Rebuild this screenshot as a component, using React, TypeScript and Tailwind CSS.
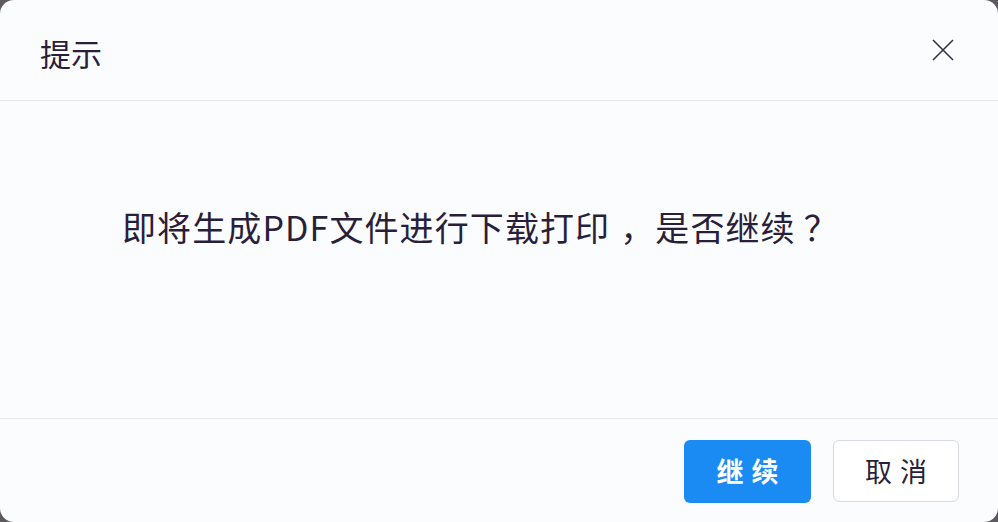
export default function App() {
  return (
    <div
      className="h-[522px] w-[998px] bg-[#5d5b60]"
      style={{ fontFamily: '"Noto Sans CJK SC", "Noto Sans", sans-serif' }}
    >
      <div className="flex h-full w-full flex-col overflow-hidden rounded-[14px] bg-[#fbfcfe] text-[#2a1f3a]">
        <div className="flex h-[101px] items-center justify-between border-b border-[#e6e8ed] pl-[40px] pr-[44px]">
          <h2 className="pt-[4px] text-[31px] leading-none">提示</h2>
          <button className="text-[#3a3045]">
            <svg width="22" height="22" viewBox="0 0 22 22" fill="none" stroke="currentColor" strokeWidth="1.6">
              <path d="M1 1L21 21M21 1L1 21" />
            </svg>
          </button>
        </div>

        <div className="h-[317px] pl-[122px] pt-[102px]">
          <p className="text-[34px] leading-[48px] tracking-[1.1px]">
            即将生成PDF文件进行下载打印
            <span className="ml-[10px]">，</span>
            是否继续
            <span className="ml-[8px]">？</span>
          </p>
        </div>

        <div className="flex flex-1 items-start justify-end gap-[22px] border-t border-[#e6e8ed] pr-[39px] pt-[21px]">
          <button className="flex h-[63px] w-[127px] items-center justify-center rounded-[6px] bg-[#1b8bf4] pl-[8px] text-[27px] font-bold tracking-[8px] text-white">
            继续
          </button>
          <button className="flex h-[62px] w-[126px] items-center justify-center rounded-[6px] border border-[#d8dbe1] bg-white pl-[8px] text-[27px] tracking-[8px] text-[#2a1f3a]">
            取消
          </button>
        </div>
      </div>
    </div>
  );
}
